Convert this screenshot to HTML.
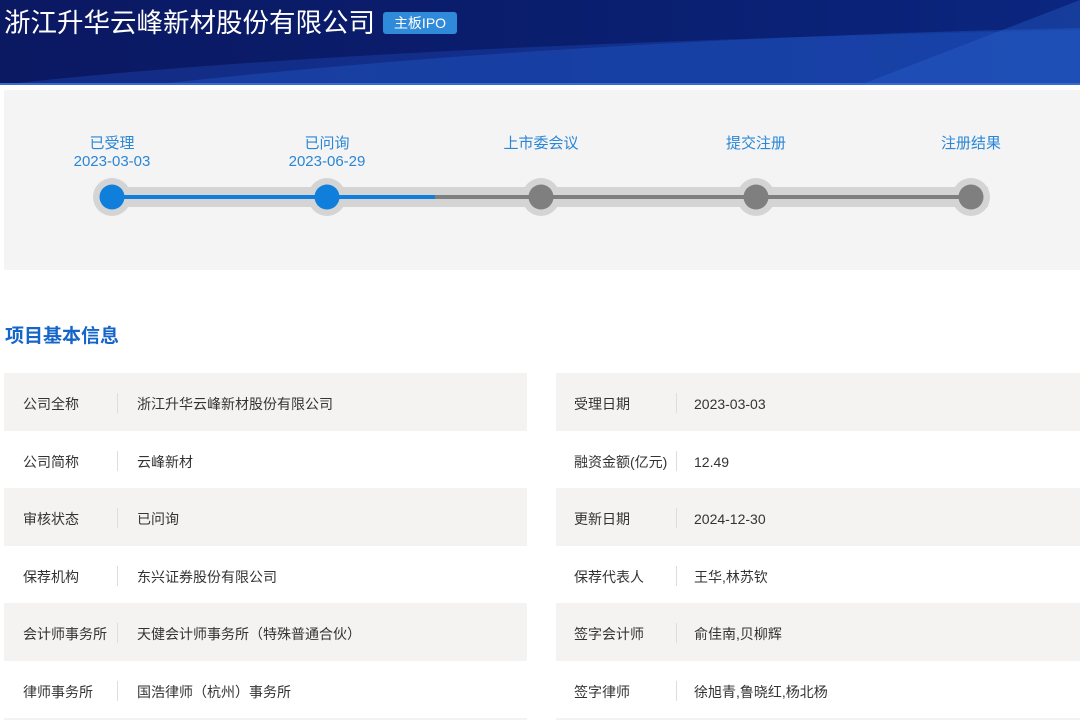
<!DOCTYPE html>
<html><head><meta charset="utf-8"><style>
*{margin:0;padding:0;box-sizing:border-box}
html,body{width:1080px;height:720px;overflow:hidden}
body{background:#fff;font-family:"Liberation Sans","Noto Sans CJK SC",sans-serif;position:relative}
.hdr{position:absolute;left:0;top:0;width:1080px;height:85px;background:linear-gradient(90deg,#0b1862,#0a1f70 60%,#0b2680);overflow:hidden;border-bottom:2px solid #3a6bd0}
.title{position:absolute;left:4px;top:5px;color:#fff;font-size:26.5px;line-height:36px}
.badge{position:absolute;left:383px;top:12px;width:74px;height:22px;background:#2f8ad9;border-radius:3px;color:#fff;font-size:14px;line-height:22px;text-align:center}
.prog{position:absolute;left:4px;top:90px;width:1076px;height:180px;background:#f4f4f4}
.lab{position:absolute;width:160px;text-align:center;color:#2a86d6;font-size:15px;line-height:18px}
.h2{position:absolute;left:5px;top:321px;font-size:19px;font-weight:bold;color:#1566c8}
.row{position:absolute;height:57.5px;font-size:14px;color:#333;line-height:63px}
.g{background:#f4f3f2}
.row span{position:absolute}
.row i{position:absolute;top:20px;width:1px;height:20px;background:#ddd}
</style></head><body>
<div class="hdr">
<svg width="1080" height="85" style="position:absolute;left:0;top:0">
<path d="M0 85 Q350 45 1080 30 L1080 85 Z" fill="#1c45b0" opacity="0.45"/>
<path d="M150 85 Q550 40 1080 28 L1080 85 Z" fill="#1f55c0" opacity="0.45"/>
<path d="M860 85 L1080 0 L1080 85 Z" fill="#2a66d2" opacity="0.35"/>
</svg>
<div class="title">浙江升华云峰新材股份有限公司</div>
<div class="badge">主板IPO</div>
</div>
<div class="prog">
<svg width="1076" height="180" style="position:absolute;left:0;top:0">
<g fill="#d4d4d4"><circle cx="108" cy="107" r="19"/><circle cx="323" cy="107" r="19"/><circle cx="537" cy="107" r="19"/><circle cx="752" cy="107" r="19"/><circle cx="967" cy="107" r="19"/></g>
<rect x="104" y="97" width="880" height="20" fill="#d4d4d4"/>
<rect x="104" y="105" width="860" height="4" fill="#7f7f7f"/>
<rect x="104" y="105" width="327" height="4" fill="#0f7fdb"/>
<circle cx="108" cy="107" r="12.5" fill="#0f7fdb"/><circle cx="323" cy="107" r="12.5" fill="#0f7fdb"/>
<g fill="#7f7f7f"><circle cx="537" cy="107" r="12.5"/><circle cx="752" cy="107" r="12.5"/><circle cx="967" cy="107" r="12.5"/></g>
</svg>
<div class="lab" style="left:28px;top:45px">已受理<br>2023-03-03</div>
<div class="lab" style="left:243px;top:45px">已问询<br>2023-06-29</div>
<div class="lab" style="left:457px;top:45px">上市委会议</div>
<div class="lab" style="left:672px;top:45px">提交注册</div>
<div class="lab" style="left:887px;top:45px">注册结果</div>
</div>
<div class="h2">项目基本信息</div>

<div class="row g" style="left:4px;top:373px;width:523px"><span style="left:19px">公司全称</span><i style="left:113px"></i><span style="left:133px">浙江升华云峰新材股份有限公司</span></div>
<div class="row g" style="left:556px;top:373px;width:524px"><span style="left:18px">受理日期</span><i style="left:120px"></i><span style="left:138px">2023-03-03</span></div>
<div class="row" style="left:4px;top:430.5px;width:523px"><span style="left:19px">公司简称</span><i style="left:113px"></i><span style="left:133px">云峰新材</span></div>
<div class="row" style="left:556px;top:430.5px;width:524px"><span style="left:18px">融资金额(亿元)</span><i style="left:120px"></i><span style="left:138px">12.49</span></div>
<div class="row g" style="left:4px;top:488px;width:523px"><span style="left:19px">审核状态</span><i style="left:113px"></i><span style="left:133px">已问询</span></div>
<div class="row g" style="left:556px;top:488px;width:524px"><span style="left:18px">更新日期</span><i style="left:120px"></i><span style="left:138px">2024-12-30</span></div>
<div class="row" style="left:4px;top:545.5px;width:523px"><span style="left:19px">保荐机构</span><i style="left:113px"></i><span style="left:133px">东兴证券股份有限公司</span></div>
<div class="row" style="left:556px;top:545.5px;width:524px"><span style="left:18px">保荐代表人</span><i style="left:120px"></i><span style="left:138px">王华,林苏钦</span></div>
<div class="row g" style="left:4px;top:603px;width:523px"><span style="left:19px">会计师事务所</span><i style="left:113px"></i><span style="left:133px">天健会计师事务所（特殊普通合伙）</span></div>
<div class="row g" style="left:556px;top:603px;width:524px"><span style="left:18px">签字会计师</span><i style="left:120px"></i><span style="left:138px">俞佳南,贝柳辉</span></div>
<div class="row" style="left:4px;top:660.5px;width:523px"><span style="left:19px">律师事务所</span><i style="left:113px"></i><span style="left:133px">国浩律师（杭州）事务所</span></div>
<div class="row" style="left:556px;top:660.5px;width:524px"><span style="left:18px">签字律师</span><i style="left:120px"></i><span style="left:138px">徐旭青,鲁晓红,杨北杨</span></div>
<div class="g" style="position:absolute;left:4px;top:718px;width:523px;height:2px"></div>
<div class="g" style="position:absolute;left:556px;top:718px;width:524px;height:2px"></div>
</body></html>
